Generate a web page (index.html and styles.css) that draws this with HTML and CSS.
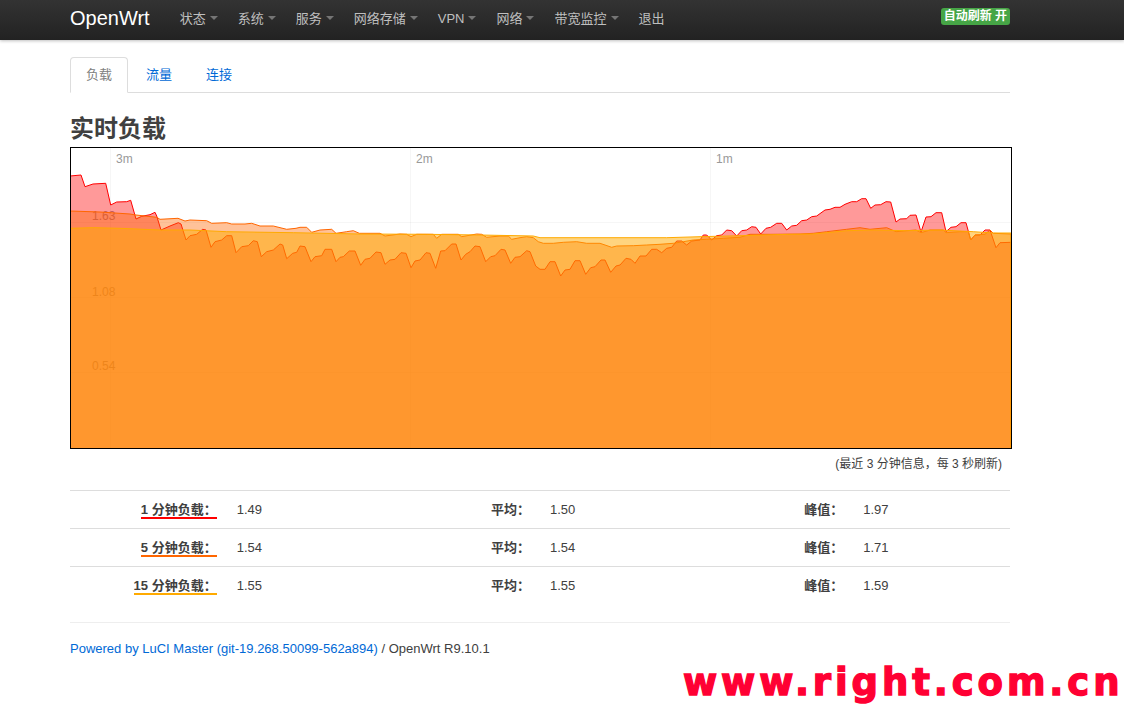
FILE: index.html
```html
<!DOCTYPE html>
<html lang="zh-CN">
<head>
<meta charset="utf-8">
<title>OpenWrt - 实时负载</title>
<link rel="stylesheet" href="styles.css">
</head>
<body>
<header class="navbar">
  <div class="container nav-inner">
    <a class="brand" href="#">OpenWrt</a>
    <ul class="nav">
      <li><a class="dropdown" href="#">状态</a></li>
      <li><a class="dropdown" href="#">系统</a></li>
      <li><a class="dropdown" href="#">服务</a></li>
      <li><a class="dropdown" href="#">网络存储</a></li>
      <li><a class="dropdown" href="#">VPN</a></li>
      <li><a class="dropdown" href="#">网络</a></li>
      <li><a class="dropdown" href="#">带宽监控</a></li>
      <li><a href="#">退出</a></li>
    </ul>
    <span class="refresh">自动刷新 开</span>
  </div>
</header>

<div class="container main">
  <ul class="tabs">
    <li class="active"><a href="#">负载</a></li>
    <li><a href="#">流量</a></li>
    <li><a href="#">连接</a></li>
  </ul>

  <h2 class="title">实时负载</h2>

  <div class="chart">
    <svg class="chart-svg" width="940" height="300" viewBox="71 148 940 300" xmlns="http://www.w3.org/2000/svg">
      <g class="grid">
        <line x1="110.5" y1="148" x2="110.5" y2="448"/>
        <line x1="410.5" y1="148" x2="410.5" y2="448"/>
        <line x1="710.5" y1="148" x2="710.5" y2="448"/>
        <line x1="71" y1="222.5" x2="1011" y2="222.5"/>
        <line x1="71" y1="297.5" x2="1011" y2="297.5"/>
        <line x1="71" y1="372.5" x2="1011" y2="372.5"/>
      </g>
      <g class="labels">
        <text x="116" y="163">3m</text>
        <text x="416" y="163">2m</text>
        <text x="716" y="163">1m</text>
        <text x="92" y="220">1.63</text>
        <text x="92" y="295.5">1.08</text>
        <text x="92" y="370">0.54</text>
      </g>
      <polyline class="load01" points="70,449 70,176 81,175 85,186.7 93,184 105.7,183.3 110.7,205 116.7,202 126.7,201.7 130.7,200.3 136,219 141.7,216.3 150,214.7 155,212.3 156.7,216 161,230 170,226 178.3,222.7 181,224 186,240 190,235.7 196.7,234.3 202.7,229.3 206,230 211,247.3 215,241.7 221.7,240 226.7,235.7 231.7,235.7 236,252.7 241.7,246.7 248.3,245.7 253.3,240.7 257.3,241.7 261.3,256.7 266.7,251.7 273.3,250 280,244 282.7,245 286.7,258.7 292.7,253.3 296.7,252.3 300,246 305,246.7 311,261.7 315,256.7 321.7,255.7 325,249.3 331.7,249.3 336,261.7 340,257.3 343.3,256.7 349.3,251 355,251 360.7,265.3 365,259.3 370,258.3 376,252 381,252.7 385,264.3 390,260 395,259.3 401,252.7 406,253.3 411,267.7 415,261 420,260 426,252.7 430,253.3 435.7,268.3 440.7,251 445,250.7 451.7,244 456,244 461,260 465.7,254.3 470,251.7 475,246 480,246.7 485.7,261.7 490.7,256.7 495,255.7 501,249.3 505,250 510.7,263.3 515,257.3 520,256.7 526.7,250.7 530,251.7 535.7,266 540,269.3 545,269.3 550,261.7 555,261.7 560.7,276 565,270 570,269.3 575,260.7 580,260.7 585.7,274.3 590.7,267.7 595,266.7 601,260 605,260 610.7,272.3 616,266 620,265 626,258.3 631,259.3 635,263.3 640,256 646,256 651.7,249.3 656.7,249.3 661.7,252.7 666.7,248.3 671.7,247.3 676.7,241 681.7,241 686.7,245 691.7,241 700,240 703.3,235 706.7,235 711.7,240 716.7,235.7 721.7,235 726.7,230 731.7,230.7 736.7,236 741.7,230.7 746.7,230 751.7,226.7 756,227.3 760.7,234 766,228.3 770.7,227.3 776.7,223.3 781.7,223.3 786.7,230 791.7,226 796.7,225.3 801.7,220.7 806.7,220 811.7,216.7 816.7,216 825,210 830,209.3 835,207.3 840,207.3 845,204.3 851.7,201.7 856.7,201.7 861.7,198.7 866,198.7 870.7,208.3 875,205 880.7,204.7 886,201.7 890.7,202 896,222 900,219 906.7,218.7 910,215.3 916,215 921,232 926,217 931,216.7 936,212.7 941.7,212.7 946,231.7 951,227.3 956,226.7 961,222.7 966,222.7 970.7,240 975,235 980,235 985,230 990,230 996,247.7 1000,242.7 1011,242.3 1011,449"/>
      <polyline class="load05" points="70,449 70,211 100,212 115,213 130,214 136,215 156.7,217.3 160,219.3 178,218.3 185,221 190,220 206.7,220.7 211.7,223.3 226.7,222.7 231.7,224 245,224 251.7,223.3 260,226 273.3,226 286.7,229.3 296,228.3 300,227.3 306.7,227.3 311.7,232.3 320,230 331.7,229.3 336,233.3 346.7,231.7 353.3,230.7 359.3,233.3 380,233.3 385,236 400,234 406.7,234.3 411,236.7 416.7,234.3 433.3,234.3 436.7,238.3 441.7,234.3 458.3,234.3 461.7,236.7 476.7,234 481.7,234.3 486.7,237.3 500,236 508.3,236 511.7,239.3 520,237.7 526.7,236.7 533.3,237.7 538.3,241.7 543.3,243.3 553.3,243.3 563.3,242.3 576.7,241.7 586.7,243.3 600,243.3 611.7,247.3 616.7,246 633.3,245.7 646.7,245 660,244.3 673.3,243.3 683.3,241.7 693.3,240 706.7,239.3 723.3,238.3 740,237.3 750,234.3 770,234.3 800,234 813.3,233.3 826.7,231.7 846.7,229.3 860,227.7 870,229.3 886.7,227.7 896,231.7 906.7,230.7 916,230 921,232.7 930,230 943.3,230 946,232.7 960,231.7 968.3,231.7 970.7,240 975,235 985,234.3 990,230 993.3,233.3 1011,234 1011,449"/>
      <polyline class="load15" points="70,449 70,228.3 93.3,227.7 120,228.3 160,230 190,230 226.7,231.7 293.3,232.7 360,234 426.7,234.3 480,235 533.3,236 540,237.7 600,237.7 666.7,237.7 700,236.7 740,235.7 790,234.3 813,234 826.7,232.7 846.7,230.7 873.3,230 906.7,230.7 940,230 973.3,231.7 993.3,233 1011,233 1011,449"/>
    </svg>
  </div>

  <div class="scale">(最近 3 分钟信息，每 3 秒刷新)</div>

  <table class="stats">
    <tr>
      <td class="key"><strong><span class="legend l1">1 分钟负载：</span></strong></td>
      <td>1.49</td>
      <td class="key"><strong>平均：</strong></td>
      <td>1.50</td>
      <td class="key"><strong>峰值：</strong></td>
      <td>1.97</td>
    </tr>
    <tr>
      <td class="key"><strong><span class="legend l5">5 分钟负载：</span></strong></td>
      <td>1.54</td>
      <td class="key"><strong>平均：</strong></td>
      <td>1.54</td>
      <td class="key"><strong>峰值：</strong></td>
      <td>1.71</td>
    </tr>
    <tr>
      <td class="key"><strong><span class="legend l15">15 分钟负载：</span></strong></td>
      <td>1.55</td>
      <td class="key"><strong>平均：</strong></td>
      <td>1.55</td>
      <td class="key"><strong>峰值：</strong></td>
      <td>1.59</td>
    </tr>
  </table>

  <footer class="footer">
    <a href="#">Powered by LuCI Master (git-19.268.50099-562a894)</a> / OpenWrt R9.10.1
  </footer>
</div>

<div class="watermark">www.right.com.cn</div>
</body>
</html>
```

FILE: styles.css
```css
* {
  box-sizing: border-box;
}

html,
body {
  margin: 0;
  padding: 0;
}

body {
  position: relative;
  width: 1124px;
  height: 710px;
  overflow: hidden;
  background: #fff;
  color: #404040;
  font-family: "Liberation Sans", "Noto Sans CJK SC", sans-serif;
  font-size: 13px;
  line-height: 18px;
}

a {
  color: #0069d6;
  text-decoration: none;
}

.container {
  width: 940px;
  margin-left: 70px;
}

/* ---------- navbar ---------- */
.navbar {
  height: 40px;
  background: linear-gradient(#333333, #222222);
  box-shadow: 0 1px 3px rgba(0, 0, 0, 0.25);
}

.nav-inner {
  display: flex;
  align-items: flex-start;
  height: 40px;
}

.brand {
  display: block;
  color: #fff;
  font-size: 20px;
  line-height: 20px;
  padding: 8px 0 12px;
  margin-right: 20px;
}

.nav {
  display: flex;
  list-style: none;
  margin: 0;
  padding: 0;
}

.nav a {
  display: block;
  padding: 9px 10px 12px;
  line-height: 19px;
  color: #bfbfbf;
  white-space: nowrap;
}

.nav a.dropdown::after {
  content: "";
  display: inline-block;
  vertical-align: top;
  width: 0;
  height: 0;
  margin-top: 7px;
  margin-left: 4px;
  border-top: 4px solid #fff;
  border-left: 4px solid transparent;
  border-right: 4px solid transparent;
  opacity: 0.35;
}

.refresh {
  margin-left: auto;
  margin-top: 8px;
  padding: 1px 3px 2px;
  border-radius: 3px;
  background: #46a546;
  color: #fff;
  font-size: 12px;
  font-weight: bold;
  line-height: 14px;
  white-space: nowrap;
}

/* ---------- tabs ---------- */
.main {
  padding-top: 17px;
}

.tabs {
  display: flex;
  list-style: none;
  margin: 0;
  padding: 0;
  border-bottom: 1px solid #ddd;
}

.tabs li {
  margin-right: 2px;
  margin-bottom: -1px;
}

.tabs a {
  display: block;
  padding: 0 15px;
  line-height: 34px;
  border: 1px solid transparent;
  border-radius: 4px 4px 0 0;
}

.tabs .active a {
  border-color: #ddd #ddd transparent;
  background: #fff;
  color: #808080;
}

/* ---------- heading ---------- */
.title {
  margin: 18px 0 0;
  font-size: 24px;
  line-height: 36px;
  font-weight: bold;
  color: #404040;
}

/* ---------- chart ---------- */
.chart {
  width: 942px;
  height: 302px;
  border: 1px solid #000;
  background: #fff;
}

.chart-svg {
  display: block;
}

.grid line {
  stroke: rgba(0, 0, 0, 0.035);
  stroke-width: 1;
}

.labels text {
  fill: #999;
  font-family: "Liberation Sans", sans-serif;
  font-size: 12px;
}

.load01 {
  fill: #ff0000;
  fill-opacity: 0.4;
  stroke: #ff0000;
  stroke-width: 1;
}

.load05 {
  fill: #ff6600;
  fill-opacity: 0.4;
  stroke: #ff6600;
  stroke-width: 1;
}

.load15 {
  fill: #ffaa00;
  fill-opacity: 0.5;
  stroke: #ffaa00;
  stroke-width: 1;
}

.scale {
  margin-top: 6px;
  padding-right: 8px;
  text-align: right;
  font-size: 12px;
  line-height: 18px;
}

/* ---------- stats table ---------- */
.stats {
  width: 100%;
  table-layout: fixed;
  border-collapse: collapse;
  margin-top: 17px;
  margin-bottom: 18px;
}

.stats td {
  padding: 10px 10px 9px;
  line-height: 18px;
  border-top: 1px solid #ddd;
  vertical-align: top;
  text-align: left;
}

.stats td.key {
  text-align: right;
}

.legend {
  white-space: nowrap;
  border-bottom: 2px solid #ff0000;
}

.legend.l5 {
  border-bottom-color: #ff6600;
}

.legend.l15 {
  border-bottom-color: #ffaa00;
}

/* ---------- footer ---------- */
.footer {
  display: block;
  border-top: 1px solid #eee;
  padding-top: 17px;
  line-height: 18px;
}

/* ---------- watermark overlay ---------- */
.watermark {
  position: absolute;
  left: 683px;
  top: 664px;
  color: #ff0033;
  font-family: "DejaVu Sans", sans-serif;
  font-weight: bold;
  font-size: 37px;
  line-height: 37px;
  letter-spacing: 3.9px;
  -webkit-text-stroke: 1.4px #ff0033;
  white-space: nowrap;
}
```
